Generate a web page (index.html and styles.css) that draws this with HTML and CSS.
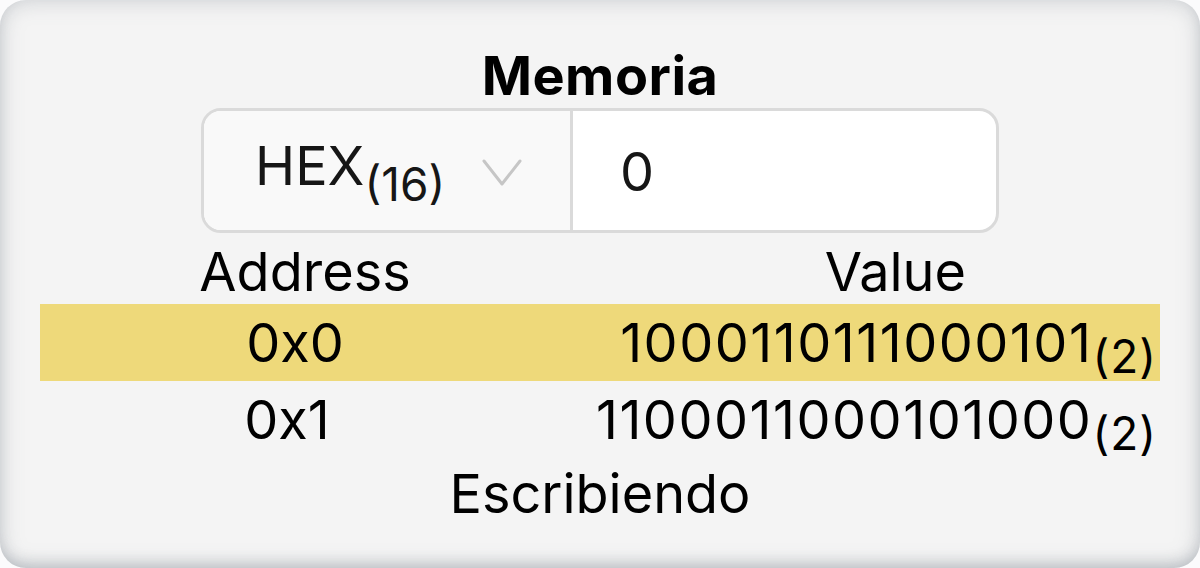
FILE: index.html
```html
<!DOCTYPE html>
<html lang="es">

<head>
    <meta charset="UTF-8">
    <meta name="viewport" content="width=device-width, initial-scale=1.0">
    <title>Memoria</title>
    <link rel="stylesheet" href="styles.css">
</head>

<body>
    <div class="panel">
        <h2>Memoria</h2>

        <div class="base-picker">
            <div class="base-select">
                <span>HEX<sub>(16)</sub></span>
                <svg class="chevron" width="40" height="28" viewBox="0 0 40 28">
                    <path d="M2 2 L20 25 L38 2" fill="none" stroke="#c6c6c6" stroke-width="3" stroke-linecap="round" stroke-linejoin="round" />
                </svg>
            </div>
            <div class="base-input">0</div>
        </div>

        <div class="mem-table">
            <div class="row head">
                <span class="addr">Address</span>
                <span class="val">Value</span>
            </div>
            <div class="row current">
                <span class="addr">0x0</span>
                <span class="val bits">1000110111000101<sub>(2)</sub></span>
            </div>
            <div class="row">
                <span class="addr">0x1</span>
                <span class="val bits">1100011000101000<sub>(2)</sub></span>
            </div>
        </div>

        <div class="status">Escribiendo</div>
    </div>
</body>

</html>
```

FILE: styles.css
```css
body {
    margin: 0;
    background: #fbfbfc;
    font-family: 'Inter', 'Noto Sans', sans-serif;
}

.panel {
    width: 1200px;
    height: 568px;
    box-sizing: border-box;
    padding-top: 44px;
    background: #f4f4f4;
    border-radius: 26px;
    box-shadow: inset 0 0 22px rgba(120, 128, 140, 0.35),
        inset 0 -8px 14px -4px rgba(120, 128, 140, 0.3);
    display: flex;
    flex-direction: column;
    align-items: center;
    color: #000;
    font-size: 54px;
}

h2 {
    margin: 0;
    font-size: 54px;
    line-height: 64px;
    font-weight: 700;
    letter-spacing: 0.5px;
}

sub {
    font-size: 46px;
    line-height: 0;
    vertical-align: -11px;
}

.base-picker {
    width: 798px;
    height: 125px;
    box-sizing: border-box;
    border: 3px solid #dadada;
    border-radius: 20px;
    display: flex;
    overflow: hidden;
    color: #161616;
    background: #fff;
}

.base-select {
    width: 369px;
    padding-left: 51px;
    box-sizing: border-box;
    background: #f9f9f9;
    border-right: 3px solid #dadada;
    display: flex;
    align-items: center;
}

.base-select span {
    line-height: 64px;
    margin-top: -10px;
}

.base-select sub {
    vertical-align: -16px;
}

.chevron {
    margin-left: 37px;
    margin-top: 4px;
}

.base-input {
    flex: 1;
    padding-left: 47px;
    display: flex;
    align-items: center;
    line-height: 64px;
    margin-top: 2px;
}

.mem-table {
    width: 1120px;
    margin-top: 7px;
}

.row {
    display: grid;
    grid-template-columns: 500px 1fr;
    height: 77px;
    line-height: 77px;
}

.row.head {
    height: 64px;
    line-height: 64px;
}

.row.current {
    background: #eed97a;
}

.addr {
    text-align: center;
    padding-right: 6px;
}

.val {
    text-align: right;
    padding-right: 5px;
}

.bits {
    letter-spacing: 1.5px;
    padding-right: 3px;
}

.bits sub {
    letter-spacing: 1px;
}

.head .addr {
    padding-left: 30px;
    padding-right: 0;
}

.head .val {
    padding-right: 194px;
}

.current .addr {
    padding-left: 10px;
    padding-right: 0;
}

.status {
    margin-top: 4px;
    line-height: 64px;
}
```
